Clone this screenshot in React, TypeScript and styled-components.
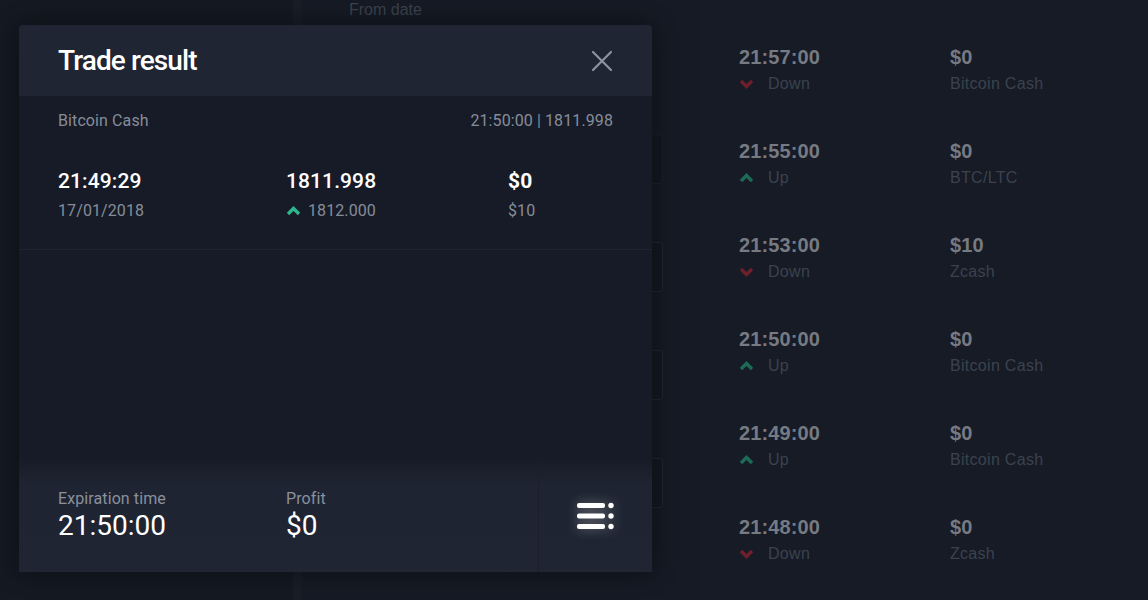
import React from 'react'
import styled, { createGlobalStyle } from 'styled-components'
// ______________________________________________________
//
const GlobalStyle = createGlobalStyle`
  html, body {
    margin: 0;
    padding: 0;
    background: #151a23;
  }
  * {
    box-sizing: border-box;
  }
`
// ______________________________________________________
//
type Trade = {
  time: string
  dir: 'up' | 'down'
  amount: string
  asset: string
}

const history: Trade[] = [
  { time: '21:57:00', dir: 'down', amount: '$0', asset: 'Bitcoin Cash' },
  { time: '21:55:00', dir: 'up', amount: '$0', asset: 'BTC/LTC' },
  { time: '21:53:00', dir: 'down', amount: '$10', asset: 'Zcash' },
  { time: '21:50:00', dir: 'up', amount: '$0', asset: 'Bitcoin Cash' },
  { time: '21:49:00', dir: 'up', amount: '$0', asset: 'Bitcoin Cash' },
  { time: '21:48:00', dir: 'down', amount: '$0', asset: 'Zcash' },
]
// ______________________________________________________
//
const Page = styled.div`
  position: relative;
  display: flex;
  width: 1148px;
  height: 600px;
  overflow: hidden;
  background: #151a23;
  font-family: 'Liberation Sans', Arial, sans-serif;
`

const Sidebar = styled.div`
  width: 302px;
  flex-shrink: 0;
  background: #141922;
  border-right: 9px solid #181d27;
`

const FilterPanel = styled.div`
  width: 400px;
  flex-shrink: 0;
  padding: 0 38px 0 47px;
  background: #151a24;
  border-right: 1px solid #171c26;
`

const FilterLabel = styled.div`
  margin-top: 1px;
  font-size: 16px;
  line-height: 18px;
  color: #3b414c;
`

const FilterInputs = styled.div`
  display: flex;
  flex-direction: column;
  gap: 58px;
  margin-top: 115px;
  margin-left: -47px;
`

const FilterInput = styled.div<{ $faint?: boolean }>`
  height: 50px;
  border: 1px solid ${(p) => (p.$faint ? '#1b2029' : '#20262f')};
  border-radius: 3px;
  background: #131821;
`

const History = styled.div`
  flex: 1;
  display: flex;
  flex-direction: column;
  padding: 45px 0 0 37px;
  background: #161b26;
`

const Row = styled.div`
  display: grid;
  grid-template-columns: 211px auto;
  height: 94px;
  flex-shrink: 0;
`

const Cell = styled.div`
  display: flex;
  flex-direction: column;
`

const RowValue = styled.div`
  font-size: 20px;
  line-height: 24px;
  font-weight: 700;
  color: #767a82;
  letter-spacing: 0.1px;
`

const RowSub = styled.div`
  display: flex;
  align-items: center;
  gap: 14px;
  margin-top: 6px;
  font-size: 16px;
  line-height: 18px;
  color: #3c424d;
  letter-spacing: 0.3px;
`
// ______________________________________________________
//
const Modal = styled.div`
  position: absolute;
  left: 19px;
  top: 25px;
  width: 633px;
  height: 547px;
  display: flex;
  flex-direction: column;
  background: #171b27;
  border-radius: 4px 4px 0 0;
  box-shadow: 0 0 24px rgba(0, 0, 0, 0.45);
  font-family: Roboto, 'Liberation Sans', sans-serif;
  overflow: hidden;
`

const Header = styled.div`
  height: 71px;
  flex-shrink: 0;
  display: flex;
  align-items: center;
  justify-content: space-between;
  padding: 0 39px 0 39px;
  background: #1f2533;
`

const Title = styled.div`
  font-size: 28px;
  font-weight: 500;
  color: #ffffff;
  letter-spacing: -0.9px;
`

const Close = styled.button`
  display: flex;
  padding: 0;
  border: 0;
  background: none;
  cursor: pointer;
`

const Body = styled.div`
  flex: 1;
  display: flex;
  flex-direction: column;
`

const Meta = styled.div`
  display: flex;
  justify-content: space-between;
  padding: 16px 39px 0 39px;
  font-size: 16px;
  line-height: 18px;
  color: #868d99;
  letter-spacing: 0.1px;
`

const TradeRow = styled.div`
  display: grid;
  grid-template-columns: 228px 222px auto;
  padding: 39px 39px 29px 39px;
  border-bottom: 1px solid #1e2330;
`

const Value = styled.div<{ $bold?: boolean }>`
  font-size: 21px;
  line-height: 24px;
  font-weight: ${(p) => (p.$bold ? 700 : 500)};
  color: #ffffff;
  letter-spacing: 0.1px;
`

const Sub = styled.div`
  display: flex;
  align-items: center;
  gap: 7px;
  margin-top: 9px;
  font-size: 16px;
  line-height: 18px;
  color: #868d99;
  letter-spacing: 0.1px;
`

const Footer = styled.div`
  height: 114px;
  flex-shrink: 0;
  display: flex;
  background: linear-gradient(to bottom, #171b27 0px, #1e2431 26px, #1f2533 100%);
`

const FooterInfo = styled.div`
  flex: 1;
  display: grid;
  grid-template-columns: 228px auto;
  padding: 32px 39px 0 39px;
`

const Label = styled.div`
  font-size: 16px;
  line-height: 18px;
  color: #8a909c;
  letter-spacing: 0.1px;
`

const Big = styled.div`
  margin-top: 2px;
  font-size: 28px;
  line-height: 32px;
  color: #ffffff;
`

const MenuButton = styled.div`
  width: 114px;
  flex-shrink: 0;
  display: flex;
  align-items: center;
  justify-content: center;
  padding-top: 2px;
  border-left: 1px solid #1a1f2b;

  svg {
    filter: drop-shadow(0 0 6px rgba(255, 255, 255, 0.35));
  }
`
// ______________________________________________________
//
const Chevron: React.FC<{ dir: 'up' | 'down'; color: string }> = ({ dir, color }) => (
  <svg width="15" height="10" viewBox="0 0 15 10">
    <polyline
      points={dir === 'up' ? '2,8 7.5,2.5 13,8' : '2,2 7.5,7.5 13,2'}
      fill="none"
      stroke={color}
      strokeWidth="3.4"
      strokeLinejoin="miter"
    />
  </svg>
)

const CloseIcon = () => (
  <svg width="22" height="22" viewBox="0 0 22 22">
    <path d="M2 2 L20 20 M20 2 L2 20" stroke="#8d94a0" strokeWidth="2.2" strokeLinecap="round" />
  </svg>
)

const MenuIcon = () => (
  <svg width="38" height="30" viewBox="0 0 38 30">
    <rect x="0" y="2" width="28" height="5" rx="2" fill="#ffffff" />
    <rect x="0" y="12.5" width="28" height="5" rx="2" fill="#ffffff" />
    <rect x="0" y="23" width="28" height="5" rx="2" fill="#ffffff" />
    <circle cx="34" cy="4.5" r="2.7" fill="#ffffff" />
    <circle cx="34" cy="15" r="2.7" fill="#ffffff" />
    <circle cx="34" cy="25.5" r="2.7" fill="#ffffff" />
  </svg>
)
// ______________________________________________________
//
const App: React.FC = () => (
  <Page>
    <GlobalStyle />
    <Sidebar />
    <FilterPanel>
      <FilterLabel>From date</FilterLabel>
      <FilterInputs>
        <FilterInput $faint />
        <FilterInput />
        <FilterInput />
        <FilterInput />
      </FilterInputs>
    </FilterPanel>
    <History>
      {history.map((t) => (
        <Row key={t.time}>
          <Cell>
            <RowValue>{t.time}</RowValue>
            <RowSub>
              <Chevron dir={t.dir} color={t.dir === 'up' ? '#1d6a57' : '#6e1f2c'} />
              {t.dir === 'up' ? 'Up' : 'Down'}
            </RowSub>
          </Cell>
          <Cell>
            <RowValue>{t.amount}</RowValue>
            <RowSub>{t.asset}</RowSub>
          </Cell>
        </Row>
      ))}
    </History>

    <Modal>
      <Header>
        <Title>Trade result</Title>
        <Close aria-label="Close">
          <CloseIcon />
        </Close>
      </Header>
      <Body>
        <Meta>
          <span>Bitcoin Cash</span>
          <span>21:50:00 | 1811.998</span>
        </Meta>
        <TradeRow>
          <div>
            <Value>21:49:29</Value>
            <Sub>17/01/2018</Sub>
          </div>
          <div>
            <Value>1811.998</Value>
            <Sub>
              <Chevron dir="up" color="#2db58e" />
              1812.000
            </Sub>
          </div>
          <div>
            <Value $bold>$0</Value>
            <Sub>$10</Sub>
          </div>
        </TradeRow>
      </Body>
      <Footer>
        <FooterInfo>
          <div>
            <Label>Expiration time</Label>
            <Big>21:50:00</Big>
          </div>
          <div>
            <Label>Profit</Label>
            <Big>$0</Big>
          </div>
        </FooterInfo>
        <MenuButton>
          <MenuIcon />
        </MenuButton>
      </Footer>
    </Modal>
  </Page>
)
// ______________________________________________________
//
export default App
